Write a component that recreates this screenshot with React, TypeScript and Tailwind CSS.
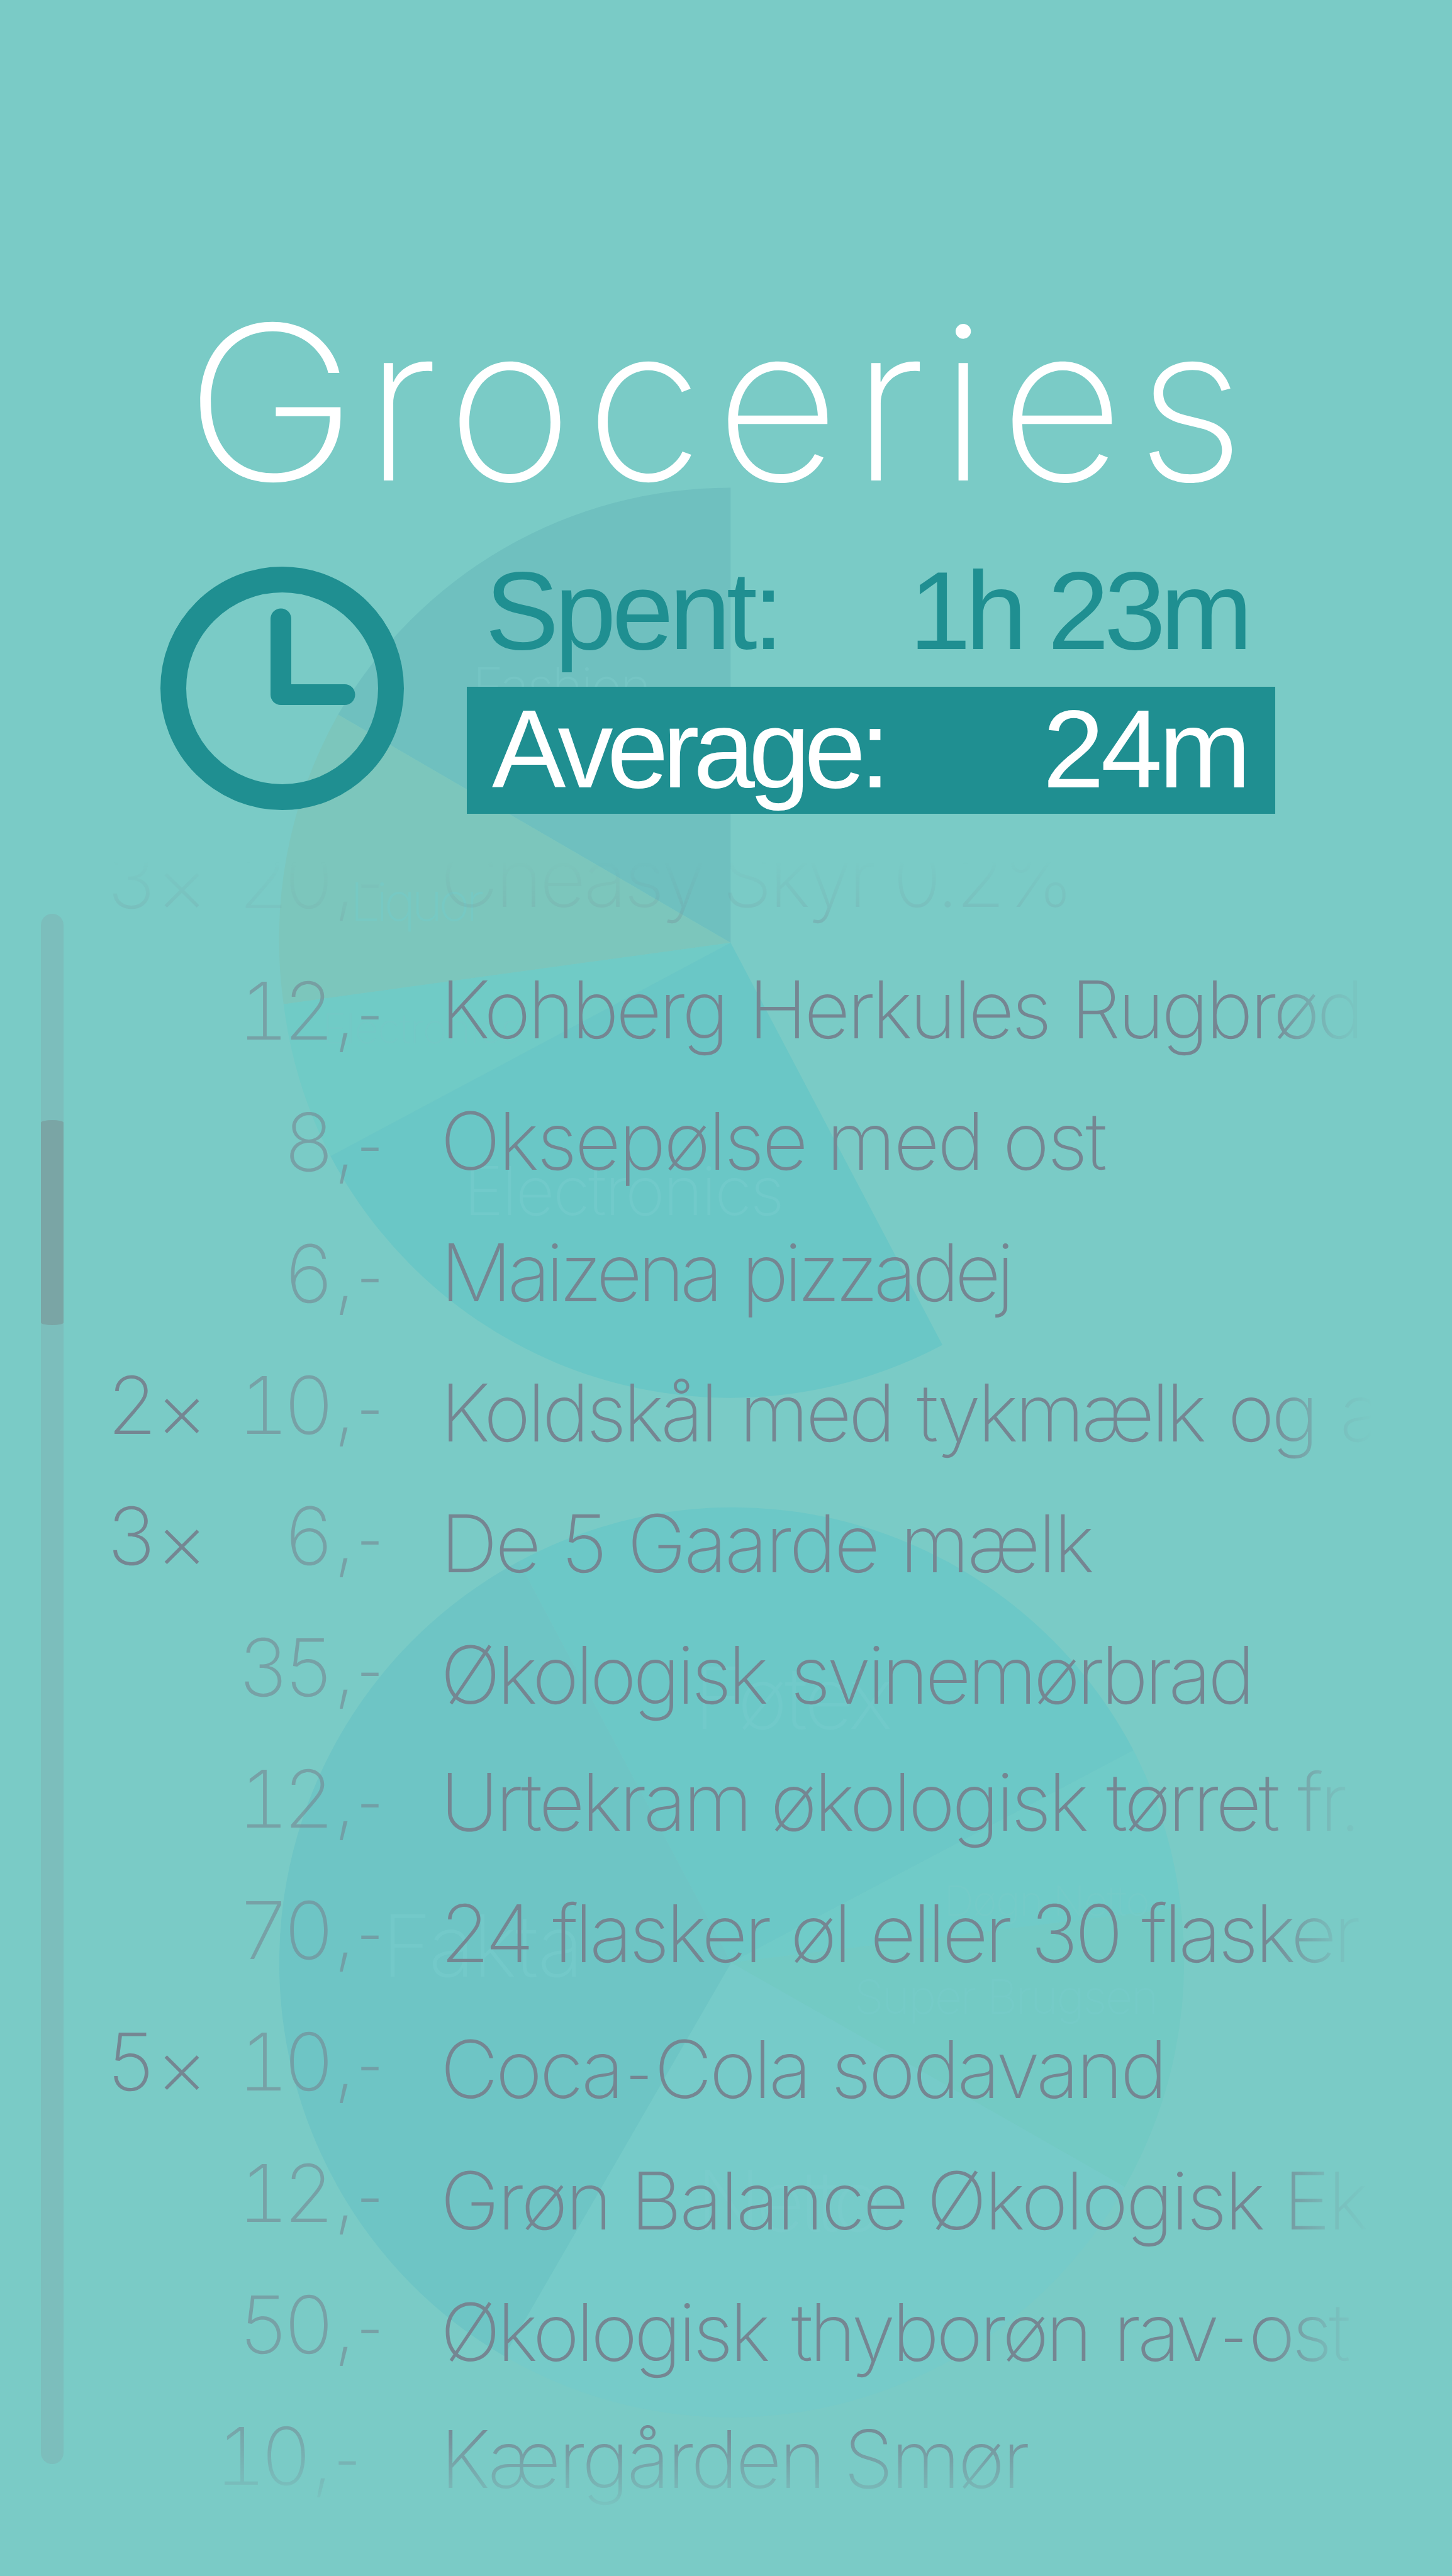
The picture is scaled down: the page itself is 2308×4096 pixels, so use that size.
import React from "react";

type Item = {
  name: string;
  price: string;
  qty?: string;
  spacing: string;
  drop: string;
  shift?: string;
};

const ITEMS: Item[] = [
  { qty: "3", price: "20", name: "Cheasy Skyr 0.2%", spacing: "tracking-[-4.32px]", drop: "pt-0" },
  { price: "12", name: "Kohberg Herkules Rugbrød", spacing: "tracking-[-4.75px] [word-spacing:4px]", drop: "pt-0" },
  { price: "8", name: "Oksepølse med ost", spacing: "tracking-[-3.49px]", drop: "pt-0" },
  { price: "6", name: "Maizena pizzadej", spacing: "tracking-[-7.2px] [word-spacing:8px]", drop: "pt-0" },
  { qty: "2", price: "10", name: "Koldskål med tykmælk og a", spacing: "tracking-[-5.1px] [word-spacing:8px]", drop: "pt-[14px]" },
  { qty: "3", price: "6", name: "De 5 Gaarde mælk", spacing: "tracking-[-3.6px] [word-spacing:3px]", drop: "pt-[14px]" },
  { price: "35", name: "Økologisk svinemørbrad", spacing: "tracking-[-5.65px] [word-spacing:10px]", drop: "pt-[14px]" },
  { price: "12", name: "Urtekram økologisk tørret fr.", spacing: "tracking-[-4.92px] [word-spacing:2px]", drop: "pt-[7px]" },
  { price: "70", name: "24 flasker øl eller 30 flasker", spacing: "tracking-[-5.2px] [word-spacing:4px]", drop: "pt-[7px]" },
  { qty: "5", price: "10", name: "Coca-Cola sodavand", spacing: "tracking-[-4.4px] [word-spacing:4px]", drop: "pt-[14px]" },
  { price: "12", name: "Grøn Balance Økologisk Ek", spacing: "tracking-[-3.59px]", drop: "pt-[14px]" },
  { price: "50", name: "Økologisk thyborøn rav-ost", spacing: "tracking-[-5.3px] [word-spacing:8px]", drop: "pt-[14px]" },
  { price: "10", name: "Kærgården Smør", spacing: "tracking-[-3.88px]", drop: "pt-[7px]", shift: "-ml-9 mr-9" },
];

function Charts() {
  return (
    <svg
      className="absolute inset-0 size-full"
      viewBox="0 0 2667 4733"
      preserveAspectRatio="none"
      aria-hidden="true"
      fontFamily="Inter"
      fontWeight="200"
    >
      <g>
        <path fill="#6fc0bf" d="M1342 1732V896A831.5 836 0 0 0 621 1313Z" />
        <path fill="#7cc6bc" d="M1342 1732L621 1313A831.5 836 0 0 0 521 1845Z" />
        <path fill="#70cbc6" d="M1342 1732L521 1845A831.5 836 0 0 0 607 2124Z" />
        <path fill="#6ac7c6" d="M1342 1732L607 2124A831.5 836 0 0 0 1731 2471Z" />
        <text x="868" y="1297" fontSize="97" letterSpacing="-3.4" fill="#75c5c4">Fashion</text>
        <text x="643" y="1692" fontSize="97" letterSpacing="-6.9" fill="#77c9c3">Liquor</text>
        <text x="592" y="1917" fontSize="76" letterSpacing="-1.3" fill="#73c9c6">Electronics</text>
        <text x="852" y="2232" fontSize="124" letterSpacing="-2.9" fill="#71caca">Electronics</text>
      </g>
      <g>
        <path fill="#6cc8c7" d="M1343 3606L953 2869A831.5 836 0 0 1 2082 3216Z" />
        <path fill="#70cbc8" d="M1343 3606L2082 3216A831.5 836 0 0 1 2169 3505Z" />
        <path fill="#73cac4" d="M1343 3606L2169 3505A831.5 836 0 0 1 2066 4018Z" />
        <path fill="#76cbc9" d="M1343 3606L2066 4018A831.5 836 0 0 1 926 4329Z" />
        <path fill="#6ec5c5" d="M1343 3606L926 4329A831.5 836 0 0 1 953 2869Z" />
        <text x="1274" y="3176" fontSize="157" letterSpacing="-5.3" fill="#71caca">Føtex</text>
        <text x="701" y="3632" fontSize="157" letterSpacing="-2.5" fill="#73c9c9">Fakta</text>
        <text x="1734" y="3520" fontSize="76" letterSpacing="-1.9" fill="#74cbc8">Døgn Netto</text>
        <text x="1569" y="3700" fontSize="87" letterSpacing="-2.9" fill="#75cbc7">Super Brugsen</text>
        <text x="1279" y="4100" fontSize="155" letterSpacing="-9" fill="#79cccb">Netto</text>
      </g>
    </svg>
  );
}

function ClockIcon() {
  return (
    <svg className="mt-[29px] ml-[255px] h-[387px] w-[387px] shrink-0" viewBox="0 0 387 387" fill="none" stroke="#1f8f91">
      <circle cx="193.5" cy="193.5" r="173" strokeWidth="41" />
      <path d="M191.5 83V203.5H293" strokeWidth="33" strokeLinecap="round" strokeLinejoin="round" />
    </svg>
  );
}

function Name({ text }: { text: string }) {
  const parts = text.split("-");
  return (
    <>
      {parts[0]}
      {parts.length > 1 && (
        <>
          <span className="inline-block translate-y-[7px] scale-x-75">-</span>
          {parts[1]}
        </>
      )}
    </>
  );
}

function Row({ item }: { item: Item }) {
  return (
    <li className="flex h-[208.9px] text-[127px] leading-[209px] whitespace-nowrap">
      <span className="flex w-[200px] shrink-0 pt-[2px]">
        {item.qty && (
          <>
            <span className="w-[77px]">{item.qty}</span>
            <span className="translate-y-[8px]">×</span>
          </>
        )}
      </span>
      <span className={`flex shrink-0 pt-[2px] opacity-60 ${item.shift ?? ""}`}>
        <span className="w-[159px] pr-[8px] text-right tracking-[-10px] tabular-nums">{item.price}</span>
        <span className="w-[36px] text-center">,</span>
        <span className="w-[64px] -translate-x-[10px] translate-y-[5px] scale-x-75 text-center">-</span>
      </span>
      <span
        className={`ml-[70px] w-[1481px] shrink-0 overflow-visible [mask-image:linear-gradient(to_right,#000_1309px,rgba(0,0,0,0.5)_1377px,rgba(0,0,0,0.18)_1421px,transparent_1481px)] ${item.drop} ${item.spacing}`}
      >
        <Name text={item.name} />
      </span>
    </li>
  );
}

export default function App() {
  return (
    <div className="relative h-[4096px] w-[2308px] overflow-hidden bg-[#7acbc6] font-['Inter',sans-serif] font-extralight">
      <Charts />
      <main className="relative flex flex-col pt-[469px]">
        <h1 className="ml-[293px] text-[342px] leading-none tracking-[19.8px] whitespace-nowrap text-white">
          <span className="mr-[13px] inline-block origin-left scale-x-[1.09]">G</span>roceries
        </h1>

        <section className="mt-[61px] flex font-['Liberation_Sans',Arial,sans-serif] text-[176px] leading-[198px] font-normal whitespace-nowrap">
          <ClockIcon />
          <dl className="ml-[100px] flex w-[1285px] flex-col gap-[22px]">
            <div className="flex justify-between pr-[44px] pl-[29px] text-[#1f8f91]">
              <dt className="tracking-[-6.8px]">Spent:</dt>
              <dd className="tracking-[-8.2px]">1h 23m</dd>
            </div>
            <div className="flex h-[202px] justify-between bg-[#1f8f91] pr-[44px] pl-[40px] text-white">
              <dt className="tracking-[-9.7px]">Average:</dt>
              <dd className="tracking-[-5.6px]">24m</dd>
            </div>
          </dl>
        </section>

        <section className="-mt-[2px] flex text-[#758692]">
          <div className="mt-[161px] ml-[65px] h-[2465px] w-[36px] shrink-0 rounded-full bg-[#7cbebc] pt-[328px]">
            <div className="h-[326px] bg-[#7aa5a5] [border-radius:50%/4px]" />
          </div>
          <ul className="ml-[70px] [mask-image:linear-gradient(to_bottom,transparent_78px,rgba(0,0,0,0.15)_150px,rgba(0,0,0,0.3)_174px,#000_265px,#000_2559px,transparent_2706px)]">
            {ITEMS.map((item, i) => (
              <Row key={i} item={item} />
            ))}
          </ul>
        </section>
      </main>
    </div>
  );
}
